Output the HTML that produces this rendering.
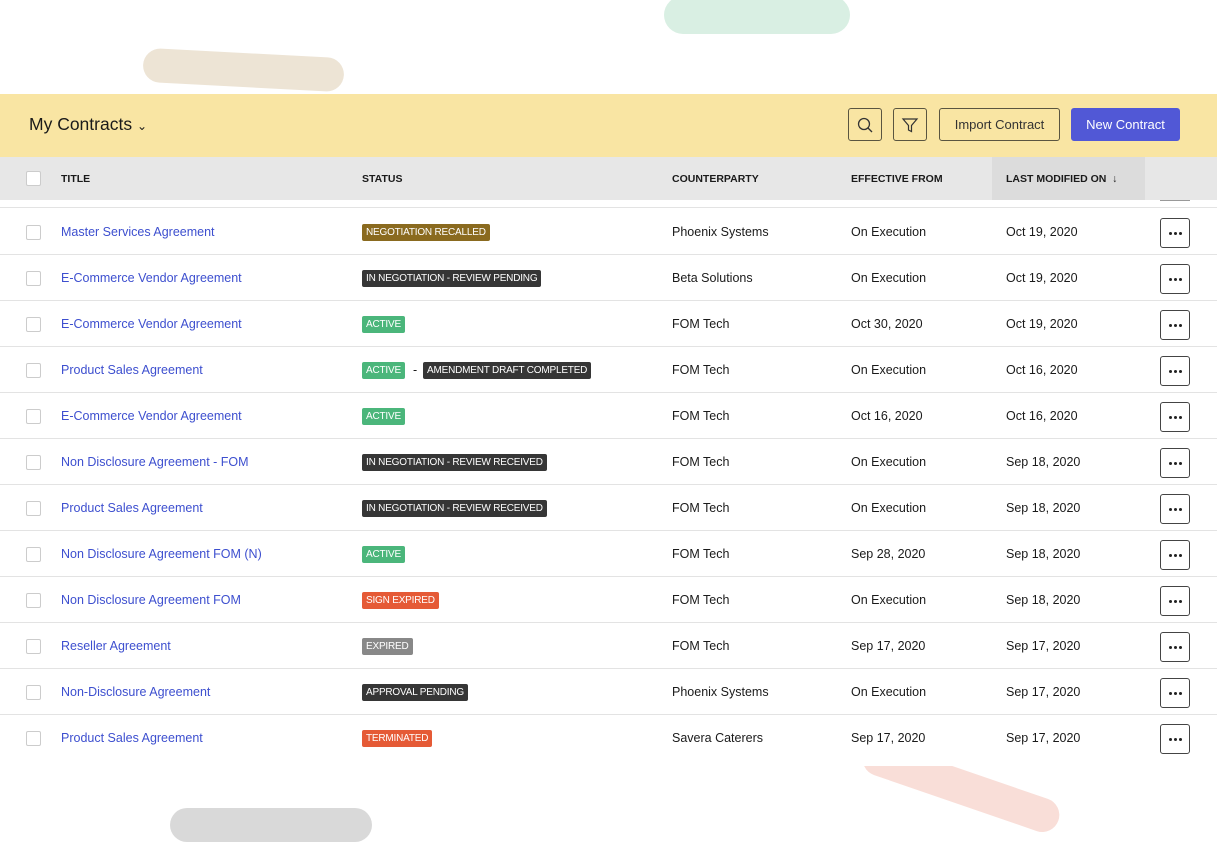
<!DOCTYPE html>
<html><head><meta charset="utf-8"><style>
*{margin:0;padding:0;box-sizing:border-box}
body{width:1217px;height:842px;background:#fff;position:relative;overflow:hidden;font-family:"Liberation Sans",sans-serif;color:#1a1a1a;font-size:12.5px}
.blob{position:absolute;border-radius:20px}
.main{position:absolute;left:0;top:94px;width:1217px;height:672px;background:#fff;z-index:2}
.hdr{position:absolute;left:0;top:0;width:1217px;height:63px;background:#f9e5a3}
.ttl{position:absolute;left:29px;top:20px;font-size:17.5px;color:#1a1a1a}
.btn{position:absolute;top:14px;height:33px;border:1px solid #5a5540;border-radius:3px;font-size:13px;line-height:31px;text-align:center;color:#333}
.colh{position:absolute;left:0;top:63px;width:1217px;height:43px;background:#e7e7e7;font-size:10.5px;font-weight:bold}
.colh span{position:absolute;top:16px}
.cb{position:absolute;left:26px;width:15px;height:15px;border:1px solid #ccc;border-radius:2px;background:#fff}
.row{position:absolute;left:0;width:1217px;height:46px;border-bottom:1px solid #e3e3e3}
.row span{position:absolute;top:16px;white-space:nowrap}
.row .t{left:61px;color:#3d4fcf}
.b{position:absolute!important;top:15px!important;height:17px;line-height:17px;padding:0 4px;font-size:10px;color:#fff;border-radius:2px;letter-spacing:-0.2px}
.dots{position:absolute;left:1160px;top:9px;width:30px;height:30px;border:1px solid #444;border-radius:3px}
.dots i{position:absolute;top:13px;width:3px;height:3px;border-radius:50%;background:#222}
</style></head><body>
<div class="blob" style="left:664px;top:-4px;width:186px;height:38px;background:#d9efe3;border-radius:19px"></div>
<div class="blob" style="left:143px;top:53px;width:201px;height:34px;background:#ede4d5;transform:rotate(3deg);border-radius:17px"></div>
<div class="blob" style="left:170px;top:808px;width:202px;height:34px;background:#d9d9d9;border-radius:17px"></div>
<div class="blob" style="left:858px;top:770px;width:206px;height:34px;background:#f9ded8;transform:rotate(19deg);border-radius:17px;z-index:1"></div>
<div class="main">
<div class="hdr">
<div class="ttl">My Contracts <span style="font-size:12px">&#8964;</span></div>
<div class="btn" style="left:848px;width:34px"><svg width="18" height="18" viewBox="0 0 18 18" style="margin-top:7px"><circle cx="8" cy="8" r="5.5" fill="none" stroke="#333" stroke-width="1.3"/><path d="M12 12l4 4" stroke="#333" stroke-width="1.3"/></svg></div>
<div class="btn" style="left:893px;width:34px"><svg width="18" height="18" viewBox="0 0 18 18" style="margin-top:7px"><path d="M2 3h14l-5.5 6.5v6l-3-1.5v-4.5z" fill="none" stroke="#333" stroke-width="1.2"/></svg></div>
<div class="btn" style="left:939px;width:121px">Import Contract</div>
<div class="btn" style="left:1071px;width:109px;background:#5158d6;border-color:#5158d6;color:#fff">New Contract</div>
</div>
<div class="colh">
<div class="cb" style="top:14px"></div>
<span style="left:61px">TITLE</span><span style="left:362px">STATUS</span><span style="left:672px">COUNTERPARTY</span><span style="left:851px">EFFECTIVE FROM</span>
<div style="position:absolute;left:992px;top:0;width:153px;height:43px;background:#dcdcdc"></div>
<span style="left:1006px">LAST MODIFIED ON &nbsp;<span style="position:static;font-weight:normal">&#8595;</span></span>
</div>
<div style="position:absolute;left:1160px;top:106px;width:30px;height:1px;background:#999"></div>
<div style="position:absolute;left:0;top:113px;width:1217px;border-top:1px solid #e3e3e3"></div>
<div id="rows"></div>
</div>
<script>
var d=[
["Master Services Agreement",[["NEGOTIATION RECALLED","#8a6a1f"]],"Phoenix Systems","On Execution","Oct 19, 2020"],
["E-Commerce Vendor Agreement",[["IN NEGOTIATION - REVIEW PENDING","#363636"]],"Beta Solutions","On Execution","Oct 19, 2020"],
["E-Commerce Vendor Agreement",[["ACTIVE","#4bb67b"]],"FOM Tech","Oct 30, 2020","Oct 19, 2020"],
["Product Sales Agreement",[["ACTIVE","#4bb67b"],["AMENDMENT DRAFT COMPLETED","#363636"]],"FOM Tech","On Execution","Oct 16, 2020"],
["E-Commerce Vendor Agreement",[["ACTIVE","#4bb67b"]],"FOM Tech","Oct 16, 2020","Oct 16, 2020"],
["Non Disclosure Agreement - FOM",[["IN NEGOTIATION - REVIEW RECEIVED","#363636"]],"FOM Tech","On Execution","Sep 18, 2020"],
["Product Sales Agreement",[["IN NEGOTIATION - REVIEW RECEIVED","#363636"]],"FOM Tech","On Execution","Sep 18, 2020"],
["Non Disclosure Agreement FOM (N)",[["ACTIVE","#4bb67b"]],"FOM Tech","Sep 28, 2020","Sep 18, 2020"],
["Non Disclosure Agreement FOM",[["SIGN EXPIRED","#e55a36"]],"FOM Tech","On Execution","Sep 18, 2020"],
["Reseller Agreement",[["EXPIRED","#888"]],"FOM Tech","Sep 17, 2020","Sep 17, 2020"],
["Non-Disclosure Agreement",[["APPROVAL PENDING","#363636"]],"Phoenix Systems","On Execution","Sep 17, 2020"],
["Product Sales Agreement",[["TERMINATED","#e55a36"]],"Savera Caterers","Sep 17, 2020","Sep 17, 2020"]];
var h="";d.forEach(function(r,i){var top=115+i*46;var s='<span class="b" style="left:362px;background:'+r[1][0][1]+'">'+r[1][0][0]+'</span>';
if(r[1][1])s+='<span style="left:413px">-</span><span class="b" style="left:423px;background:'+r[1][1][1]+'">'+r[1][1][0]+'</span>';
h+='<div class="row" style="top:'+top+'px'+(i==11?';border-bottom:none':'')+'"><div class="cb" style="top:16px"></div><span class="t">'+r[0]+'</span>'+s+'<span style="left:672px">'+r[2]+'</span><span style="left:851px">'+r[3]+'</span><span style="left:1006px">'+r[4]+'</span><div class="dots"><i style="left:8px"></i><i style="left:13px"></i><i style="left:18px"></i></div></div>';});
document.getElementById("rows").innerHTML=h;
</script>
</body></html>
